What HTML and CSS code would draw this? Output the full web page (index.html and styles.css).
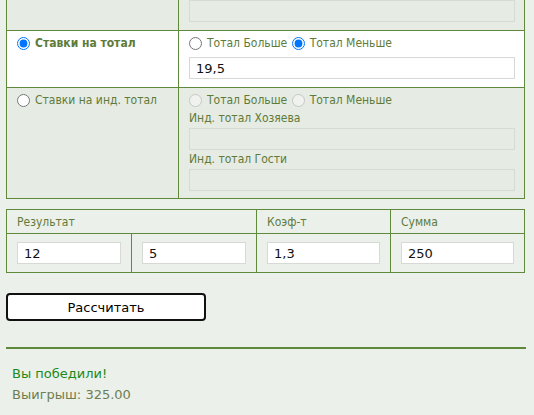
FILE: index.html
```html
<!DOCTYPE html>
<html lang="ru">
<head>
    <meta charset="UTF-8">
    <meta name="viewport" content="width=device-width, initial-scale=1.0">
    <title>Калькулятор ставок</title>
    <link rel="stylesheet" href="styles.css">
</head>
<body>
    <div class="page">
        <table class="bets">
            <tr class="row-off row-tail">
                <td class="kind"></td>
                <td class="opts"><input type="text" class="field" disabled></td>
            </tr>
            <tr class="row-on">
                <td class="kind"><label class="active"><input type="radio" name="kind" checked> Ставки на тотал</label></td>
                <td class="opts">
                    <div class="choice"><label><input type="radio" name="total"> Тотал Больше</label> <label><input type="radio" name="total" checked> Тотал Меньше</label></div>
                    <input type="text" class="field" value="19,5">
                </td>
            </tr>
            <tr class="row-off">
                <td class="kind"><label><input type="radio" name="kind"> Ставки на инд. тотал</label></td>
                <td class="opts">
                    <div class="choice"><label><input type="radio" name="ind" disabled> Тотал Больше</label> <label><input type="radio" name="ind" disabled> Тотал Меньше</label></div>
                    <div class="caption">Инд. тотал Хозяева</div>
                    <input type="text" class="field" disabled>
                    <div class="caption">Инд. тотал Гости</div>
                    <input type="text" class="field" disabled>
                </td>
            </tr>
        </table>

        <table class="score">
            <tr>
                <th colspan="2">Результат</th>
                <th>Коэф-т</th>
                <th>Сумма</th>
            </tr>
            <tr>
                <td class="w-half"><input type="text" class="field" value="12"></td>
                <td class="w-half"><input type="text" class="field" value="5"></td>
                <td class="w-coef"><input type="text" class="field" value="1,3"></td>
                <td class="w-sum"><input type="text" class="field" value="250"></td>
            </tr>
        </table>

        <button id="calculate">Рассчитать</button>

        <hr class="divider">

        <div class="result">
            <div class="win">Вы победили!</div>
            <div class="payout">Выигрыш: 325.00</div>
        </div>
    </div>
</body>
</html>
```

FILE: styles.css
```css
body {
    margin: 0;
    background-color: #ecf0ea;
    font-family: "DejaVu Sans", Verdana, sans-serif;
    font-size: 12px;
    color: #5e7b3a;
}
.page {
    padding: 0 6px;
}
table {
    border-collapse: collapse;
    width: 519px;
    font-family: "DejaVu Sans Condensed", "DejaVu Sans", sans-serif;
    font-stretch: condensed;
}
td, th {
    border: 1px solid #5f8a3b;
    vertical-align: top;
}
.bets {
    margin-top: -1px;
}
.bets td {
    padding: 3px 9px 7px 10px;
}
.bets .row-tail td {
    padding: 0 9px 8px 10px;
}
.bets .kind {
    width: 152px;
}
.row-on td {
    background: #fff;
    padding-bottom: 8px;
}
.row-off td {
    background: #e6ebe4;
}
label {
    display: inline-flex;
    align-items: center;
    line-height: 18px;
}
label input {
    margin: 0 5px 0 0;
}
.active {
    font-weight: bold;
}
.choice {
    height: 18px;
}
.choice + .field {
    margin-top: 5px;
}
.choice label + label {
    margin-left: 1px;
}
.caption {
    line-height: 19px;
}
.field {
    display: block;
    width: 100%;
    box-sizing: border-box;
    height: 22px;
    margin: 0;
    padding: 1px 6px;
    border: 1px solid #d6d9d4;
    background: #fff;
    font-family: "DejaVu Sans", Verdana, sans-serif;
    font-size: 13px;
    color: #111;
    outline: none;
}
.field:disabled {
    background: #e6ebe4;
}
.score {
    margin-top: 10px;
}
.score th {
    height: 23px;
    padding: 0 10px;
    text-align: left;
    font-weight: normal;
    vertical-align: middle;
}
.score td {
    padding: 8px 10px 8px 10px;
}
.w-half {
    width: 104px;
}
.w-coef {
    width: 113px;
}
button {
    display: block;
    width: 200px;
    height: 28px;
    margin-top: 20px;
    background: #fff;
    border: 2px solid #111;
    border-radius: 4px;
    font-family: "DejaVu Sans", Verdana, sans-serif;
    font-size: 13px;
    color: #000;
    cursor: pointer;
}
.divider {
    margin: 26px 0 0;
    width: 520px;
    height: 0;
    border: none;
    border-top: 2px solid #5f8a3b;
}
.result {
    padding: 14px 6px;
    font-size: 13px;
    line-height: 21px;
}
.win {
    color: #1a8a1a;
}
.payout {
    color: #6c7e50;
}
```
